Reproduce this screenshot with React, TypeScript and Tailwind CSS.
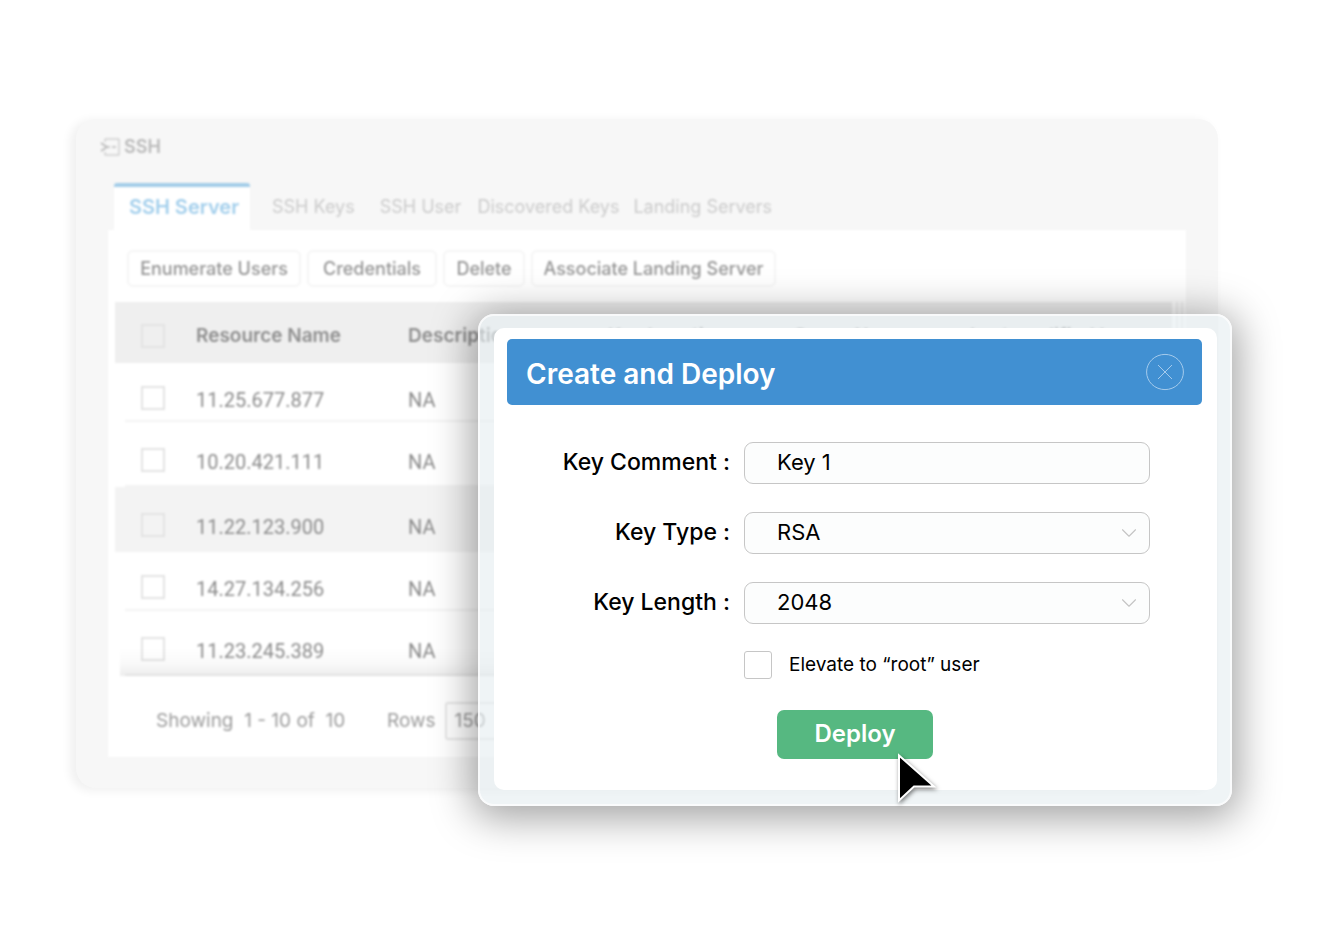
import { ChevronDown } from "lucide-react";

const tabs = [
  { name: "SSH Server", active: true },
  { name: "SSH Keys", gap: "ml-[22px]" },
  { name: "SSH User", gap: "ml-[25px]" },
  { name: "Discovered Keys", gap: "ml-4" },
  { name: "Landing Servers", gap: "ml-[14px]" },
];

const actions = [
  { name: "Enumerate Users", width: "w-[174px]" },
  { name: "Credentials", width: "w-[130px]" },
  { name: "Delete", width: "w-[82px]" },
  { name: "Associate Landing Server", width: "w-[245px]" },
];

const rows = [
  { address: "11.25.677.877", height: "h-[59px]" },
  { address: "10.20.421.111", height: "h-[65px]" },
  { address: "11.22.123.900", height: "h-[65px] bg-[#f3f3f3]" },
  { address: "14.27.134.256", height: "h-[59px]" },
  { address: "11.23.245.389", height: "h-[65px]" },
];

const tick =
  "block size-6 appearance-none border-2 border-[#e3e3e3] bg-transparent";
const headCell = "pt-[7px] font-semibold";
const bodyCell = "border-b-2 border-[#f3f3f3] pt-[17px]";

function ServerIcon() {
  return (
    <svg
      width="20"
      height="18"
      viewBox="0 0 20 18"
      fill="none"
      stroke="#bdbdbd"
      aria-hidden="true"
    >
      <path d="M5 4V1h14v16H5v-3" strokeWidth="1" />
      <path d="M1 5l6 4-6 4" strokeWidth="2" />
      <path d="M7 9h3M12 9h4" strokeWidth="1.6" />
    </svg>
  );
}

function ServerPanel() {
  return (
    <section
      aria-label="SSH"
      className="rounded-[20px] bg-[#f7f7f7] px-8 pb-[31px] shadow-[-5px_2px_10px_1px_rgba(0,0,0,0.06)]"
    >
      <div className="blur-[1px]">
        <h1 className="-ml-2 flex h-16 items-center gap-1 pb-[9px] text-[18px] font-semibold text-[#bababa]">
          <ServerIcon />
          SSH
        </h1>
        <nav className="flex h-[47px] items-stretch pl-[6px]">
          {tabs.map((tab) => (
            <a
              key={tab.name}
              href="#"
              className={
                tab.active
                  ? "flex w-[136px] items-center justify-center whitespace-nowrap rounded-t-[3px] border-t-4 border-[#a3cde8] bg-white pb-1 pl-1 text-[20px] font-semibold text-[#a3cfec]"
                  : `flex items-center whitespace-nowrap text-[18px] text-[#cbcbcb] ${tab.gap}`
              }
            >
              {tab.name}
            </a>
          ))}
        </nav>
        <div className="bg-white pb-[17px]">
          <div className="flex gap-[6px] px-[19px] pt-5 pb-[15px]">
            {actions.map((action) => (
              <button
                key={action.name}
                type="button"
                className={`h-[37px] whitespace-nowrap rounded-md border-2 border-[#f5f5f5] pb-px text-[18px] font-medium text-[#959595] ${action.width}`}
              >
                {action.name}
              </button>
            ))}
          </div>
          <div className="flex pr-[3px] pl-[7px]">
            <table className="min-w-0 flex-1 table-fixed border-separate border-spacing-0 text-left text-[20px] text-[#8c8c8c]">
              <colgroup>
                <col className="w-[81px]" />
                <col className="w-[212px]" />
                <col className="w-[200px]" />
                <col className="w-[185px]" />
                <col className="w-[177px]" />
                <col />
              </colgroup>
              <thead className="bg-[#efefef] text-[19px] text-[#8f8f8f]">
                <tr className="h-[61px]">
                  <th className="pt-[6px] pl-[26px]">
                    <input type="checkbox" aria-label="Select all" className={tick} />
                  </th>
                  <th className={headCell}>Resource Name</th>
                  <th className={headCell}>Description</th>
                  <th className={headCell}>Key Location</th>
                  <th className={headCell}>Group Name</th>
                  <th className={headCell}>Last modified by</th>
                </tr>
              </thead>
              <tbody className="font-[Roboto,sans-serif]">
                {rows.map((row) => (
                  <tr key={row.address} className={row.height}>
                    <td className="relative pt-[10px] pl-[26px] after:absolute after:right-0 after:bottom-0 after:left-[10px] after:h-[2px] after:bg-[#f3f3f3]">
                      <input type="checkbox" aria-label={`Select ${row.address}`} className={tick} />
                    </td>
                    <td className={bodyCell}>{row.address}</td>
                    <td className={bodyCell}>NA</td>
                    <td colSpan={3} className="border-b-2 border-[#f3f3f3]" />
                  </tr>
                ))}
              </tbody>
            </table>
            <div className="ml-1 w-[7px] border-x-2 border-[#f0f0f0]" />
          </div>
          <div className="relative mr-4 ml-3">
            <div className="absolute inset-x-0 bottom-0 h-7 bg-linear-to-t from-black/[0.07] via-black/[0.02] to-transparent" />
          </div>
          <div className="flex items-center pt-[26px] pl-12 text-[19px] text-[#9c9c9c]">
            <p className="w-[231px] whitespace-pre">Showing{"  "}1 - 10 of{"  "}10</p>
            <label htmlFor="rows">Rows</label>
            <select
              id="rows"
              defaultValue="150"
              className="ml-[9px] h-[38px] w-20 appearance-none rounded-[3px] border-2 border-[#e6e6e6] bg-transparent pl-2"
            >
              <option>150</option>
            </select>
          </div>
        </div>
      </div>
    </section>
  );
}

const field =
  "h-[42px] w-full appearance-none rounded-[9px] border border-[#c6c6c6] bg-[#fcfdfd] pb-[2px] pl-8 text-[22px] text-black outline-none";
const fieldLabel = "whitespace-nowrap pb-[2px] text-right text-[23px] font-medium";

function SelectField({ id, value }: { id: string; value: string }) {
  return (
    <div className="relative">
      <select id={id} defaultValue={value} className={field}>
        <option>{value}</option>
      </select>
      <ChevronDown
        className="pointer-events-none absolute top-2 right-2 text-[#c4c4c4]"
        size={26}
        strokeWidth={1}
        aria-hidden="true"
      />
    </div>
  );
}

function DeployDialog() {
  return (
    <div
      role="dialog"
      aria-labelledby="dialog-title"
      className="absolute top-[314px] right-28 w-[754px] rounded-2xl border-2 border-white/70 bg-[#e4edf0]/60 pt-3 pr-[13px] pb-[14px] pl-[14px] shadow-[0_6px_40px_6px_rgba(0,0,0,0.37)]"
    >
      <div className="rounded-[10px] bg-white pt-[11px] pr-[15px] pb-[31px] pl-[13px]">
        <header className="flex h-[66px] items-center justify-between rounded-[5px] bg-[#4190d2] pr-[18px] pl-[19px] text-white">
          <h2 id="dialog-title" className="pt-1 text-[28px] font-semibold">
            Create and Deploy
          </h2>
          <button type="button" aria-label="Close">
            <svg width="38" height="38" viewBox="0 0 38 38" fill="none" stroke="#a5cbec" aria-hidden="true">
              <ellipse cx="19" cy="19" rx="18.4" ry="17.6" />
              <path d="M12 12l14 14M26 12L12 26" />
            </svg>
          </button>
        </header>
        <form className="pt-[37px] pr-[52px]" onSubmit={(event) => event.preventDefault()}>
          <div className="grid grid-cols-[223px_1fr] items-center gap-x-[14px] gap-y-7">
            <label htmlFor="key-comment" className={fieldLabel}>Key Comment :</label>
            <input id="key-comment" type="text" defaultValue="Key 1" className={field} />
            <label htmlFor="key-type" className={fieldLabel}>Key Type :</label>
            <SelectField id="key-type" value="RSA" />
            <label htmlFor="key-length" className={fieldLabel}>Key Length :</label>
            <SelectField id="key-length" value="2048" />
          </div>
          <div className="flex items-center gap-[17px] pt-[27px] pl-[237px]">
            <input
              id="elevate"
              type="checkbox"
              className="size-7 appearance-none rounded-[3px] border border-[#c6c6c6] bg-white"
            />
            <label htmlFor="elevate" className="text-[19px]">
              Elevate to “root” user
            </label>
          </div>
          <div className="pt-[30px] pl-[270px]">
            <button
              type="submit"
              className="relative h-[49px] w-[156px] rounded-[7px] bg-[#56b881] text-[24px] font-semibold text-white"
            >
              Deploy
              <svg
                className="absolute top-10 left-[114px] overflow-visible drop-shadow-[1px_2px_2px_rgba(0,0,0,0.5)]"
                width="46"
                height="56"
                viewBox="0 0 46 56"
                aria-hidden="true"
              >
                <path d="M8 5.500V50.500L23 36.500H43Z" fill="#000" stroke="#fff" strokeWidth="2" />
              </svg>
            </button>
          </div>
        </form>
      </div>
    </div>
  );
}

export default function App() {
  return (
    <main className="relative min-h-screen bg-white pt-[119px] pr-[126px] pb-[142px] pl-[76px] font-[Inter,sans-serif]">
      <ServerPanel />
      <DeployDialog />
    </main>
  );
}
